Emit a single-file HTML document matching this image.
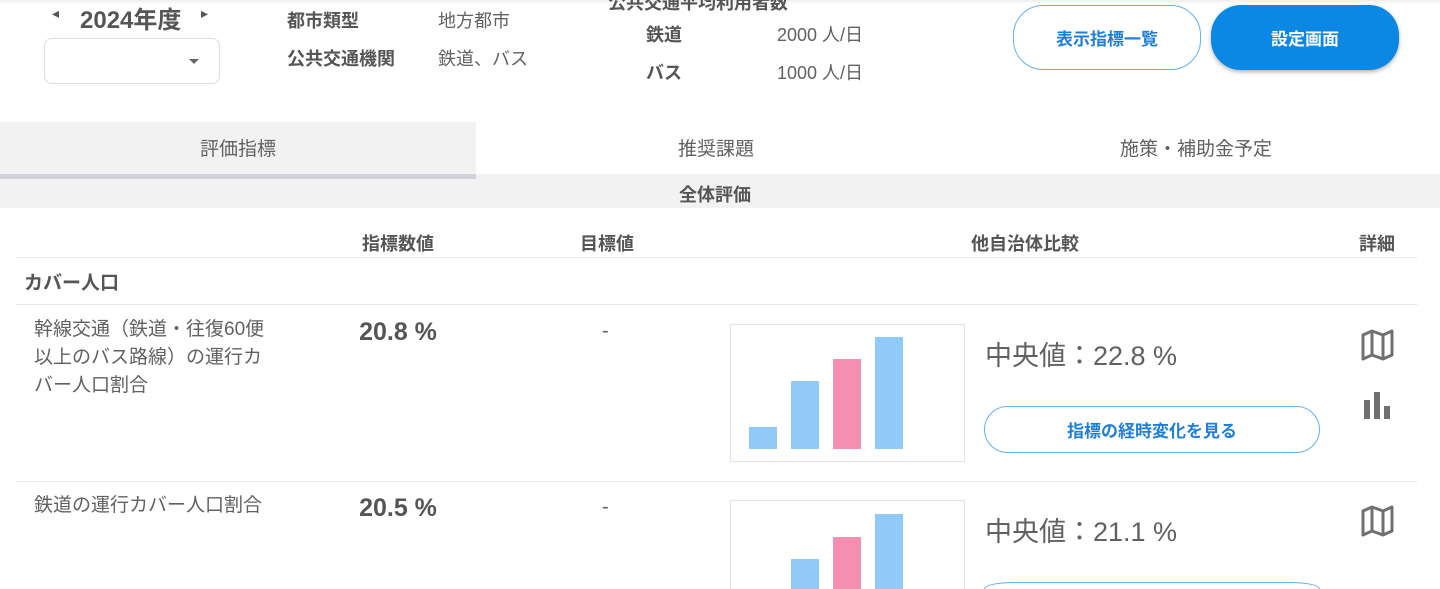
<!DOCTYPE html>
<html style="width:1440px;height:589px;overflow:hidden"><head><meta charset="utf-8"><style>
*{margin:0;padding:0;box-sizing:border-box}
body{width:1440px;height:589px;overflow:hidden;background:#fff;font-family:"Liberation Sans","Noto Sans CJK JP",sans-serif;color:#616161;position:relative}
.a{position:absolute;white-space:nowrap}
.b{font-weight:bold}
.line{position:absolute;left:16px;width:1401px;height:1px;background:#e6e6e6}
.bar{position:absolute;width:28px;bottom:12px}
.btn{position:absolute;border-radius:30px;display:flex;align-items:center;justify-content:center;font-weight:bold;font-size:17px}
</style></head><body>
<div class="a" style="left:0;top:0;width:1440px;height:4px;background:linear-gradient(#eee,#fff)"></div>
<div class="a" style="left:52px;top:5px;font-size:14px;color:#555">◂</div>
<div class="a b" style="left:80px;top:0px;font-size:24px;color:#555">2024年度</div>
<div class="a" style="left:201px;top:5px;font-size:14px;color:#555">▸</div>
<div class="a" style="left:44px;top:38px;width:176px;height:46px;border:1px solid #ddd;border-radius:8px"></div>
<div class="a" style="left:189px;top:59px;width:0;height:0;border-left:5px solid transparent;border-right:5px solid transparent;border-top:5px solid #666"></div>
<div class="a b" style="left:287px;top:7px;font-size:18px;color:#555">都市類型</div>
<div class="a" style="left:438px;top:7px;font-size:18px">地方都市</div>
<div class="a b" style="left:287px;top:45px;font-size:18px;color:#555">公共交通機関</div>
<div class="a" style="left:438px;top:45px;font-size:18px">鉄道、バス</div>
<div class="a b" style="left:608px;top:-11px;font-size:18px;color:#555">公共交通平均利用者数</div>
<div class="a b" style="left:646px;top:21px;font-size:18px;color:#555">鉄道</div>
<div class="a" style="left:777px;top:21px;font-size:18px">2000 人/日</div>
<div class="a b" style="left:646px;top:59px;font-size:18px;color:#555">バス</div>
<div class="a" style="left:777px;top:59px;font-size:18px">1000 人/日</div>
<div class="btn" style="left:1013px;top:5px;width:188px;height:65px;border:1px solid #64b0f0;color:#1e7fd8">表示指標一覧</div>
<div class="btn" style="left:1211px;top:5px;width:188px;height:65px;background:#0a88e4;color:#fff;box-shadow:0 2px 4px rgba(0,0,0,.3)">設定画面</div>

<div class="a" style="left:0;top:122px;width:476px;height:53px;background:#f2f2f2"></div>
<div class="a" style="left:0;top:174px;width:1440px;height:34px;background:#f2f2f2"></div>
<div class="a" style="left:0;top:174px;width:476px;height:5px;background:#d0d3da"></div>
<div class="a" style="left:0;top:134px;width:476px;text-align:center;font-size:19px">評価指標</div>
<div class="a" style="left:476px;top:134px;width:480px;text-align:center;font-size:19px">推奨課題</div>
<div class="a" style="left:956px;top:134px;width:480px;text-align:center;font-size:19px">施策・補助金予定</div>
<div class="a b" style="left:0;top:181px;width:1430px;text-align:center;font-size:18px;color:#555">全体評価</div>

<div class="a b" style="left:338px;top:230px;width:120px;text-align:center;font-size:18px;color:#555">指標数値</div>
<div class="a b" style="left:547px;top:230px;width:120px;text-align:center;font-size:18px;color:#555">目標値</div>
<div class="a b" style="left:925px;top:230px;width:200px;text-align:center;font-size:18px;color:#555">他自治体比較</div>
<div class="a b" style="left:1347px;top:230px;width:60px;text-align:center;font-size:18px;color:#555">詳細</div>
<div class="line" style="top:257px"></div>
<div class="a b" style="left:24px;top:268px;font-size:19px;color:#555">カバー人口</div>
<div class="line" style="top:304px"></div>

<div class="a" style="left:34px;top:316px;font-size:19px;line-height:28px">幹線交通（鉄道・往復60便<br>以上のバス路線）の運行カ<br>バー人口割合</div>
<div class="a b" style="left:338px;top:318px;width:120px;text-align:center;font-size:25px;color:#555">20.8 %</div>
<div class="a" style="left:602px;top:320px;font-size:20px">-</div>
<div class="a" style="left:730px;top:324px;width:235px;height:138px;border:1px solid #e3e3e3">
<div class="bar" style="left:18px;height:22px;background:#90caf9"></div>
<div class="bar" style="left:60px;height:68px;background:#90caf9"></div>
<div class="bar" style="left:102px;height:90px;background:#f48fb1"></div>
<div class="bar" style="left:144px;height:112px;background:#90caf9"></div>
</div>
<div class="a" style="left:985px;top:334px;font-size:27px;color:#616161">中央値：22.8 %</div>
<div class="btn" style="left:984px;top:406px;width:336px;height:47px;border:1px solid #64b0f0;color:#1e7fd8">指標の経時変化を見る</div>
<svg class="a" style="left:1361px;top:329px" width="33" height="32" viewBox="0 0 33 32"><path d="M2 6 L11 2 L22 6 L31 2 V26 L22 30 L11 26 L2 30 Z M11 2 V26 M22 6 V30" fill="none" stroke="#707070" stroke-width="3" stroke-linejoin="round"/></svg>
<svg class="a" style="left:1363px;top:391px" width="30" height="28"><rect x="1" y="9" width="6" height="19" fill="#707070"/><rect x="11" y="1" width="6" height="27" fill="#707070"/><rect x="21" y="15" width="6" height="13" fill="#707070"/></svg>
<div class="line" style="top:481px"></div>

<div class="a" style="left:34px;top:492px;font-size:19px;line-height:28px">鉄道の運行カバー人口割合</div>
<div class="a b" style="left:338px;top:494px;width:120px;text-align:center;font-size:25px;color:#555">20.5 %</div>
<div class="a" style="left:602px;top:496px;font-size:20px">-</div>
<div class="a" style="left:730px;top:500px;width:235px;height:89px;border:1px solid #e3e3e3;border-bottom:none;overflow:hidden">
<div class="a" style="left:60px;top:58px;width:28px;height:40px;background:#90caf9"></div>
<div class="a" style="left:102px;top:36px;width:28px;height:60px;background:#f48fb1"></div>
<div class="a" style="left:144px;top:13px;width:28px;height:80px;background:#90caf9"></div>
</div>
<div class="a" style="left:985px;top:510px;font-size:27px;color:#616161">中央値：21.1 %</div>
<div class="a" style="left:984px;top:582px;width:336px;height:7px;border:1px solid #64b0f0;border-bottom:none;border-radius:30px 30px 0 0/7px 7px 0 0"></div>
<svg class="a" style="left:1361px;top:505px" width="33" height="32" viewBox="0 0 33 32"><path d="M2 6 L11 2 L22 6 L31 2 V26 L22 30 L11 26 L2 30 Z M11 2 V26 M22 6 V30" fill="none" stroke="#707070" stroke-width="3" stroke-linejoin="round"/></svg>
</body></html>
